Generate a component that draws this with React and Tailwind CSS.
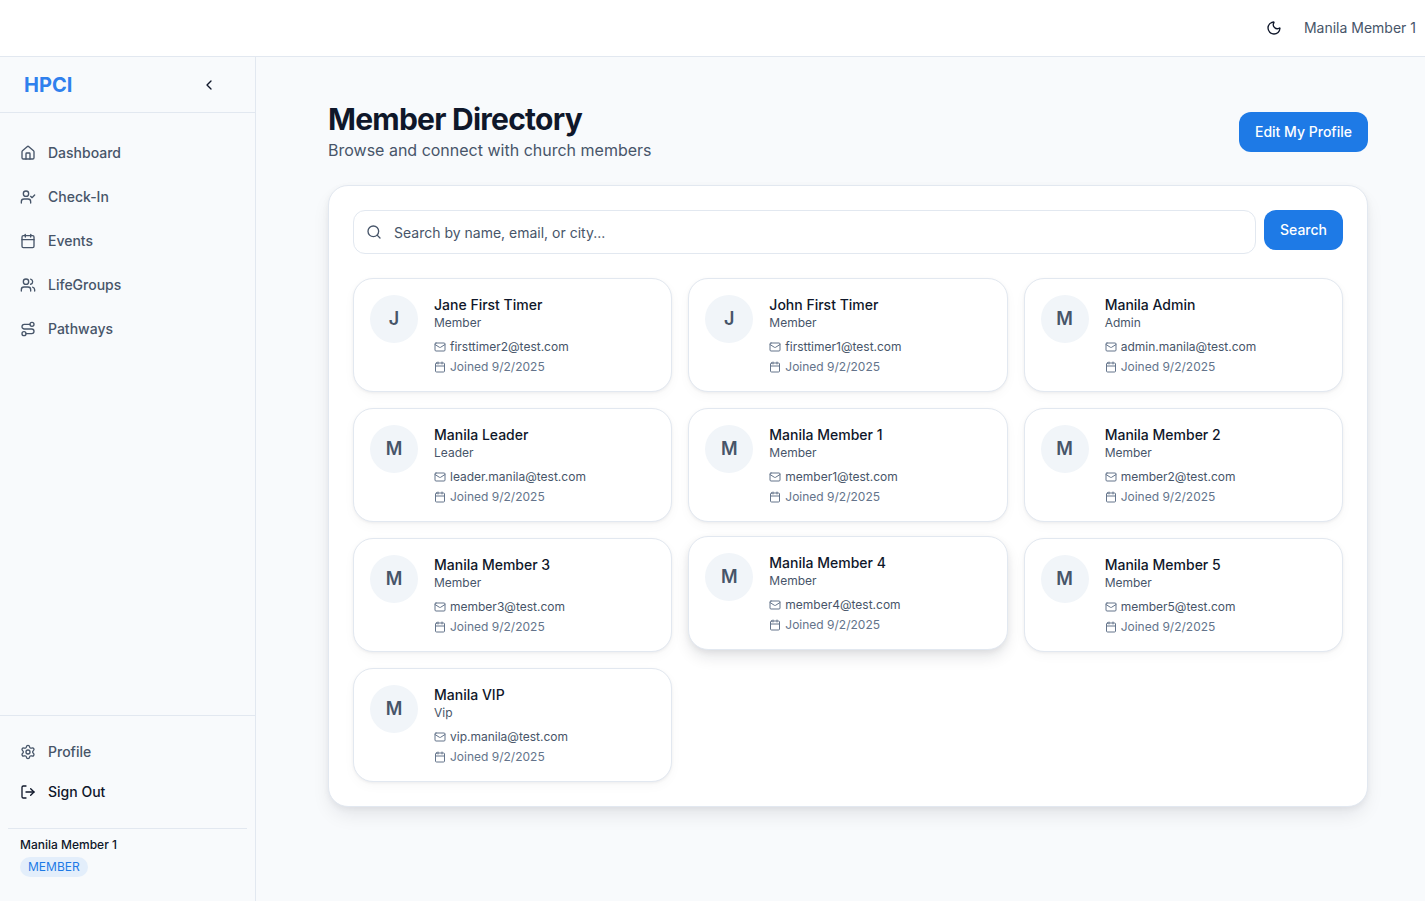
import React from "react";
import { House, UserCheck, Calendar, Users, Route, Settings, LogOut, Moon, ChevronLeft, Search, Mail } from "lucide-react";

const nav = [
  ["Dashboard", House],
  ["Check-In", UserCheck],
  ["Events", Calendar],
  ["LifeGroups", Users],
  ["Pathways", Route],
];

const members = [
  ["J", "Jane First Timer", "Member", "firsttimer2@test.com"],
  ["J", "John First Timer", "Member", "firsttimer1@test.com"],
  ["M", "Manila Admin", "Admin", "admin.manila@test.com"],
  ["M", "Manila Leader", "Leader", "leader.manila@test.com"],
  ["M", "Manila Member 1", "Member", "member1@test.com"],
  ["M", "Manila Member 2", "Member", "member2@test.com"],
  ["M", "Manila Member 3", "Member", "member3@test.com"],
  ["M", "Manila Member 4", "Member", "member4@test.com", true],
  ["M", "Manila Member 5", "Member", "member5@test.com"],
  ["M", "Manila VIP", "Vip", "vip.manila@test.com"],
];

function Card({ m }) {
  const [initial, name, role, email, hovered] = m;
  return (
    <div
      className={
        "flex gap-4 rounded-[20px] border border-[#e2e8f0] bg-white p-4 h-[114px] " +
        (hovered
          ? "-translate-y-0.5 shadow-[0_8px_16px_-2px_rgba(15,23,42,0.12),0_2px_6px_rgba(15,23,42,0.06)]"
          : "shadow-[0_1px_3px_rgba(15,23,42,0.06),0_4px_12px_rgba(15,23,42,0.03)]")
      }
    >
      <div className="flex h-12 w-12 shrink-0 items-center justify-center rounded-full bg-[#f1f5f9] text-lg font-semibold text-[#475569]">
        {initial}
      </div>
      <div className="min-w-0 flex-1">
        <div className="text-sm leading-5 font-medium text-[#0f172a]">{name}</div>
        <div className="text-xs leading-4 text-[#475569]">{role}</div>
        <div className="mt-1.5 flex h-5 items-center gap-1 text-xs text-[#475569]">
          <Mail className="h-3 w-3 text-[#64748b]" />
          <span>{email}</span>
        </div>
        <div className="flex h-5 items-center gap-1 text-xs text-[#64748b]">
          <Calendar className="h-3 w-3" />
          <span>Joined 9/2/2025</span>
        </div>
      </div>
    </div>
  );
}

export default function App() {
  return (
    <div className="flex h-[901px] w-full flex-col overflow-hidden bg-[#f8fafc] font-['Inter',sans-serif] antialiased">
      <header className="flex h-[57px] shrink-0 items-center justify-end border-b border-[#e2e8f0] bg-white pr-[9px]">
        <Moon className="h-4 w-4 text-[#0f172a]" />
        <span className="ml-[22px] text-sm text-[#475569]">Manila Member 1</span>
      </header>
      <div className="flex min-h-0 flex-1">
        <aside className="flex w-[256px] shrink-0 flex-col border-r border-[#e2e8f0] bg-[#f8fafc]">
          <div className="flex h-[56px] shrink-0 items-center justify-between border-b border-[#e2e8f0] pl-6 pr-[38px]">
            <span className="text-xl font-bold text-[#2f80ed]">HPCI</span>
            <ChevronLeft className="h-4 w-4 text-[#0f172a]" />
          </div>
          <nav className="flex flex-1 flex-col px-2 pt-[18px]">
            {nav.map(([label, Icon]) => (
              <div key={label} className="flex h-11 items-center gap-3 px-3 text-sm font-medium text-[#475569]">
                <Icon className="h-4 w-4" />
                <span>{label}</span>
              </div>
            ))}
          </nav>
          <div className="shrink-0 border-t border-[#e2e8f0] px-2 pt-4">
            <div className="flex h-10 items-center gap-3 px-3 text-sm font-medium text-[#475569]">
              <Settings className="h-4 w-4" />
              <span>Profile</span>
            </div>
            <div className="flex h-10 items-center gap-3 px-3 text-sm font-medium text-[#0f172a]">
              <LogOut className="h-4 w-4" />
              <span>Sign Out</span>
            </div>
            <div className="mt-4 h-[73px] border-t border-[#e2e8f0] px-3 pt-2">
              <div className="text-xs leading-4 font-medium text-[#0f172a]">Manila Member 1</div>
              <span className="mt-1 inline-block rounded-full bg-[#e3eefb] px-2 text-xs leading-[20px] text-[#1e7ae6]">
                MEMBER
              </span>
            </div>
          </div>
        </aside>
        <main className="min-w-0 flex-1 pl-[72px] pr-[57px] pt-[44px]">
          <div className="flex items-start justify-between">
            <div>
              <h1 className="text-[30px] leading-9 font-bold tracking-[-0.75px] text-[#0f172a]">Member Directory</h1>
              <p className="mt-px text-base leading-6 text-[#475569]">Browse and connect with church members</p>
            </div>
            <button className="mt-[11px] h-10 rounded-xl bg-[#1e7ae6] px-4 text-sm font-medium text-white">
              Edit My Profile
            </button>
          </div>
          <section className="mt-[23px] rounded-[20px] border border-[#e2e8f0] bg-white p-6 shadow-[0_10px_20px_-4px_rgba(15,23,42,0.10),0_2px_6px_rgba(15,23,42,0.05)]">
            <div className="flex items-start gap-2">
              <div className="flex h-11 flex-1 items-center gap-3 rounded-xl border border-[#e2e8f0] bg-white px-3 text-sm text-[#475569]">
                <Search className="h-4 w-4" />
                <span className="pt-0.5">Search by name, email, or city...</span>
              </div>
              <button className="h-10 rounded-xl bg-[#1e7ae6] px-4 text-sm font-medium text-white">Search</button>
            </div>
            <div className="mt-6 grid grid-cols-3 gap-4">
              {members.map((m) => (
                <Card key={m[1]} m={m} />
              ))}
            </div>
          </section>
        </main>
      </div>
    </div>
  );
}
